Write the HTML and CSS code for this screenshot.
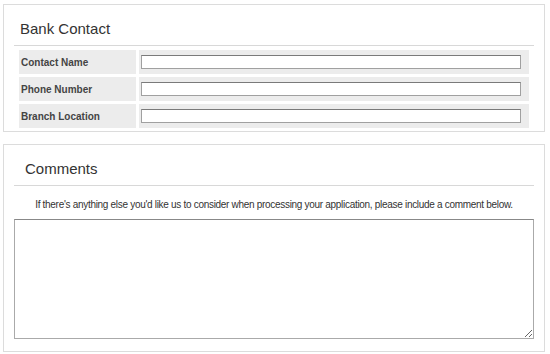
FILE: index.html
```html
<!DOCTYPE html>
<html lang="en">
<head>
    <meta charset="UTF-8">
    <title>Bank Contact</title>
    <link rel="stylesheet" href="styles.css">
</head>
<body>
    <div class="panel">
        <h2 class="panel-title">Bank Contact</h2>
        <div class="fields">
            <label class="field-label" for="contactName">Contact Name</label>
            <div class="field-input"><input type="text" id="contactName"></div>
            <label class="field-label" for="phoneNumber">Phone Number</label>
            <div class="field-input"><input type="text" id="phoneNumber"></div>
            <label class="field-label" for="branchLocation">Branch Location</label>
            <div class="field-input"><input type="text" id="branchLocation"></div>
        </div>
    </div>

    <div class="panel panel-comments">
        <h2 class="panel-title panel-title-wide">Comments</h2>
        <p class="panel-note">If there's anything else you'd like us to consider when processing your application, please include a comment below.</p>
        <textarea id="comments"></textarea>
    </div>
</body>
</html>
```

FILE: styles.css
```css
body {
    margin: 0;
    background-color: #fff;
    font-family: "Liberation Sans", Arial, sans-serif;
    color: #333;
}
.panel {
    width: 520px;
    margin: 4px 0 0 3px;
    padding: 0 10px 3px;
    border: 1px solid #dcdcdc;
}
.panel-comments {
    margin-top: 12px;
    padding-bottom: 12px;
}
.panel-title {
    margin: 0;
    padding: 15px 6px 7px;
    font-size: 15px;
    line-height: 18px;
    font-weight: normal;
    color: #333;
    border-bottom: 1px solid #d8d8d8;
}
.panel-title-wide {
    padding-left: 11px;
}
.fields {
    display: grid;
    grid-template-columns: 117px 1fr;
    gap: 3px;
    margin: 4px 5px 0;
}
.field-label {
    display: flex;
    align-items: center;
    height: 24px;
    padding-left: 2px;
    background-color: #ececec;
    font-size: 10px;
    font-weight: bold;
    color: #444;
}
.field-input {
    display: flex;
    align-items: center;
    padding: 0 8px 0 2px;
    background-color: #ececec;
}
.field-input input {
    width: 100%;
    height: 14px;
    margin: 0;
    padding: 0 2px;
    box-sizing: border-box;
    border: 1px solid #a0a0a0;
    border-top-color: #7a7a7a;
    background: #fff;
}
.panel-note {
    margin: 12px 0 7px;
    font-size: 10px;
    line-height: 14px;
    letter-spacing: -0.3px;
    text-align: center;
    color: #333;
}
textarea {
    display: block;
    width: 100%;
    height: 120px;
    margin: 0;
    box-sizing: border-box;
    border: 1px solid #aaa;
    border-top-color: #888;
}
```
